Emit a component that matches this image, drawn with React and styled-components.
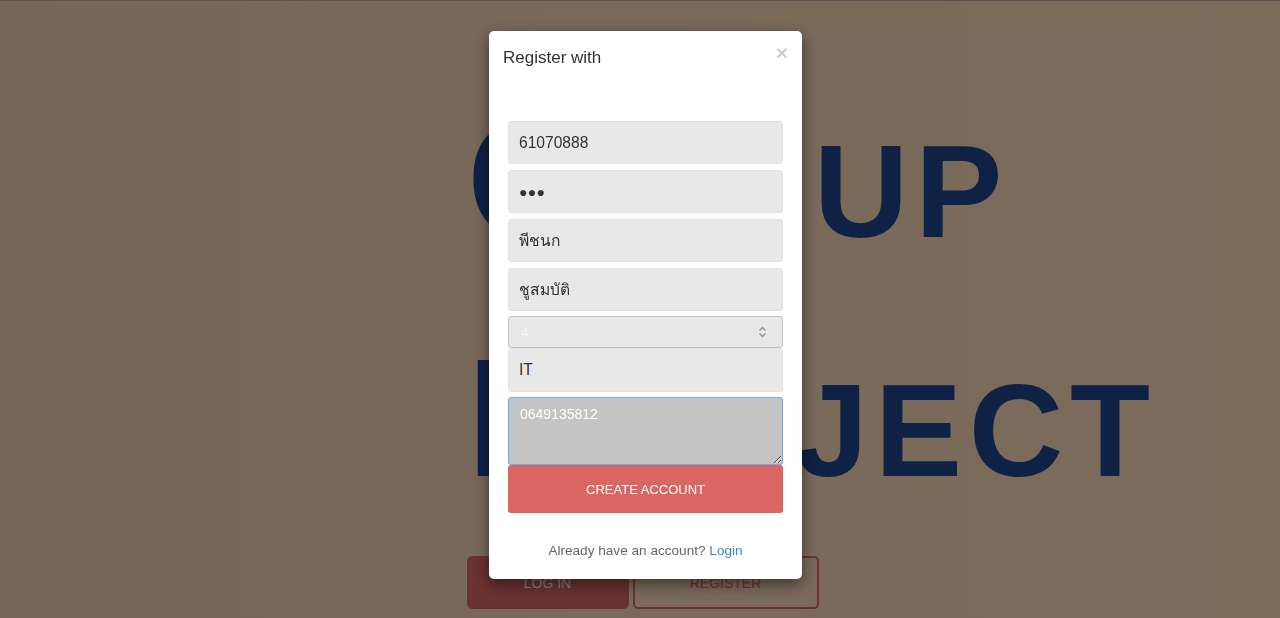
import React from "react";
import styled, { createGlobalStyle } from "styled-components";

const GlobalStyle = createGlobalStyle`
  html, body {
    margin: 0;
    padding: 0;
    height: 100%;
    overflow: hidden;
  }
  body {
    font-family: "Liberation Sans", Arial, "Noto Sans", sans-serif;
  }
  * {
    box-sizing: border-box;
  }
`;

const Page = styled.div`
  height: 618px;
  border-top: 1px solid #a9a9a9;
  background: linear-gradient(90deg, #eccdb4 0%, #f8d8b4 100%);
  padding-left: 466.5px;
`;

const BigWord = styled.h1`
  margin: ${(p) => p.$top}px 0 0;
  font-family: "Liberation Sans", Arial, sans-serif;
  font-weight: 700;
  font-size: 131px;
  line-height: 131px;
  letter-spacing: 6.7px;
  color: #1e448a;
  white-space: nowrap;

  &::first-letter {
    font-size: 168px;
    line-height: 100px;
  }
`;

const ButtonRow = styled.div`
  display: flex;
  gap: 4px;
  margin-top: 60px;
`;

const HeroButton = styled.button`
  height: 53px;
  width: ${(p) => p.$w}px;
  border-radius: 5px;
  font-family: "Liberation Sans", Arial, sans-serif;
  font-size: 14px;
  text-transform: uppercase;
  border: 2px solid #d66462;
  background: ${(p) => (p.$solid ? "#d66462" : "transparent")};
  color: ${(p) => (p.$solid ? "#ffffff" : "#d66462")};
`;

const Backdrop = styled.div`
  position: fixed;
  inset: 0;
  background: rgba(0, 0, 0, 0.5);
  padding: 31px 0 0 489px;
`;

const Modal = styled.div`
  width: 313px;
  height: 548px;
  background: #fff;
  border-radius: 5px;
  box-shadow: 0 5px 15px rgba(0, 0, 0, 0.5);
  display: flex;
  flex-direction: column;
`;

const Header = styled.div`
  display: flex;
  justify-content: space-between;
  align-items: flex-start;
  padding: 15px 14px 0 14px;
  height: 90px;
`;

const Title = styled.h4`
  margin: 0;
  font-size: 17px;
  font-weight: 400;
  line-height: 24px;
  color: #333;
`;

const Close = styled.button`
  border: 0;
  background: none;
  padding: 0;
  margin-top: -4px;
  font-family: "Liberation Sans", Arial, sans-serif;
  font-size: 21px;
  font-weight: 700;
  line-height: 1;
  color: #000;
  opacity: 0.2;
`;

const Form = styled.form`
  display: flex;
  flex-direction: column;
  padding: 0 19px;
`;

const Field = styled.input`
  height: ${(p) => p.$h ?? 43}px;
  margin: 0 0 ${(p) => p.$gap ?? 6}px;
  padding: 0 10px;
  border: 1px solid #e2e2e2;
  border-radius: 3px;
  background: #e8e8e8;
  font-family: "Liberation Sans", Arial, "Noto Sans", sans-serif;
  font-size: ${(p) => p.$size ?? 15.6}px;
  letter-spacing: ${(p) => p.$track ?? 0}px;
  color: #333;
  outline: none;
`;

const SelectBox = styled.div`
  height: 32px;
  display: flex;
  align-items: center;
  justify-content: space-between;
  padding: 0 15px 0 12px;
  border: 1px solid #c4c4c4;
  border-radius: 3px;
  background: #e8e8e8;
  font-size: 14px;
  color: #f7f7f7;
`;

const Area = styled.textarea`
  height: 68px;
  margin-top: 5px;
  padding: 8px 11px;
  border: 1px solid #66afe9;
  border-radius: 3px;
  background: #c4c4c4;
  font-family: "Liberation Sans", Arial, sans-serif;
  font-size: 14px;
  color: #fff;
  outline: none;
  resize: vertical;
`;

const Submit = styled.button`
  height: 48px;
  border: 0;
  border-radius: 3px;
  background: #d96663;
  color: #fff;
  font-family: "Liberation Sans", Arial, sans-serif;
  font-size: 13px;
  text-transform: uppercase;
`;

const Footer = styled.p`
  margin: 28px 0 0;
  text-align: center;
  font-size: 13.6px;
  line-height: 20px;
  color: #666;
  a {
    color: #3a87c8;
    text-decoration: none;
  }
`;

const Spinner = () => (
  <svg width="9" height="14" viewBox="0 0 9 14" fill="none" stroke="#8a8a8a" strokeWidth="1.2">
    <path d="M1.5 5.5l3-3 3 3" />
    <path d="M1.5 8.5l3 3 3-3" />
  </svg>
);

export default function App() {
  return (
    <>
      <GlobalStyle />
      <Page>
        <BigWord $top={125}>GROUP</BigWord>
        <BigWord $top={108}>PROJECT</BigWord>
        <ButtonRow>
          <HeroButton $solid $w={162}>Log in</HeroButton>
          <HeroButton $w={186}>Register</HeroButton>
        </ButtonRow>
      </Page>
      <Backdrop>
        <Modal>
          <Header>
            <Title>Register with</Title>
            <Close type="button">×</Close>
          </Header>
          <Form onSubmit={(e) => e.preventDefault()}>
            <Field defaultValue="61070888" />
            <Field defaultValue="●●●" $size={14} $track={0.3} />
            <Field defaultValue="พีชนก" />
            <Field defaultValue="ชูสมบัติ" $gap={5} />
            <SelectBox>
              <span>4</span>
              <Spinner />
            </SelectBox>
            <Field defaultValue="IT" $h={44} $gap={0} />
            <Area defaultValue="0649135812" />
            <Submit type="submit">Create account</Submit>
          </Form>
          <Footer>
            Already have an account? <a href="#">Login</a>
          </Footer>
        </Modal>
      </Backdrop>
    </>
  );
}
